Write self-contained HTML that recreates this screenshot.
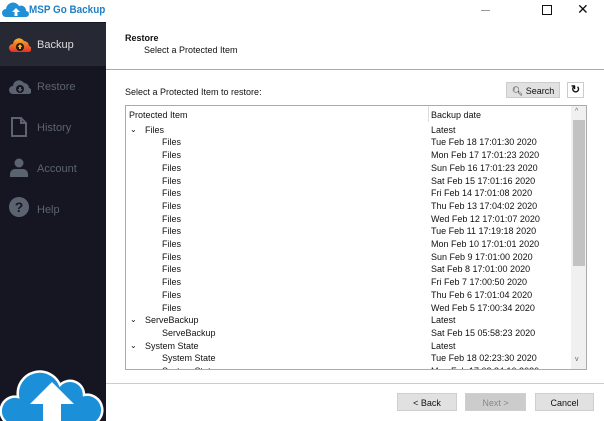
<html><head><style>
body{margin:0;width:604px;height:421px;overflow:hidden;font-family:"Liberation Sans",sans-serif;font-size:9px;color:#111;background:#fff;position:relative}
.sb{position:absolute;left:0;top:0;width:106px;height:421px;background:#151621}
.logo{position:absolute;left:0;top:0;width:106px;height:22px;background:#fff}
.nav{position:absolute;left:0;width:106px;height:43px;color:#5c6370;font-size:11px}
.nav span{position:absolute;left:37px;top:16px}
.ic{position:absolute;left:9px;top:14px}
.abs{position:absolute}
.row{position:absolute;height:12.7px;line-height:12.7px;font-size:9px;white-space:nowrap}
.btn{position:absolute;top:393px;height:18px;line-height:18px;text-align:center;font-size:9px;background:#e1e1e1;border:1px solid #cfcfcf;box-sizing:border-box}
</style></head><body>
<div class="sb"></div>
<div class="logo">
<svg class="abs" style="left:2px;top:2px" width="28" height="16" viewBox="0 0 28 16"><path d="M4 15a4 4 0 0 1 0-8a7 7 0 0 1 13-3a5 5 0 0 1 7 5a3 3 0 0 1 0 6z" fill="#1f8fd6"/><path d="M14 6l-4 4h2.5v4h3v-4H18z" fill="#fff"/></svg>
<div class="abs" style="left:29px;top:4px;font-weight:bold;font-size:11px;color:#1f7fc4;white-space:nowrap;transform:scaleX(0.9);transform-origin:0 0">MSP Go Backup</div></div>
<div class="nav" style="top:23px;background:#262833;color:#ddd"><svg class="ic" style="top:14px" width="22" height="16" viewBox="0 0 22 16"><defs><linearGradient id="g" x1="0" y1="0" x2="0" y2="1"><stop offset="0" stop-color="#f6b22a"/><stop offset="1" stop-color="#e5302a"/></linearGradient></defs><path d="M4 15a4 4 0 0 1 0-8a6 6 0 0 1 11-3a5 5 0 0 1 5 5a3 3 0 0 1 -1 6z" fill="url(#g)"/><circle cx="11" cy="10" r="4" fill="#1a1a1a"/><path d="M11 7l-2.5 3h1.5v2h2v-2h1.5z" fill="#f6b22a"/></svg><span>Backup</span></div>
<div class="nav" style="top:65px"><svg class="ic" width="22" height="16" viewBox="0 0 22 16"><path d="M4 15a4 4 0 0 1 0-8a6 6 0 0 1 11-3a5 5 0 0 1 5 5a3 3 0 0 1 -1 6z" fill="#5c6370"/><circle cx="11" cy="10" r="4" fill="#151621"/><path d="M11 13l-2.5-3h1.5v-2h2v2h1.5z" fill="#5c6370"/></svg><span>Restore</span></div>
<div class="nav" style="top:106px"><svg class="ic" style="left:11px;top:11px" width="16" height="20" viewBox="0 0 16 20"><path d="M1 1h9l5 5v13H1z" fill="none" stroke="#5c6370" stroke-width="2"/><path d="M10 1v5h5" fill="none" stroke="#5c6370" stroke-width="2"/></svg><span>History</span></div>
<div class="nav" style="top:147px"><svg class="ic" style="left:10px;top:11px" width="18" height="20" viewBox="0 0 18 20"><circle cx="9" cy="5" r="4.5" fill="#5c6370"/><path d="M0 19v-3a5 5 0 0 1 5-5h8a5 5 0 0 1 5 5v3z" fill="#5c6370"/></svg><span>Account</span></div>
<div class="nav" style="top:188px"><svg class="ic" style="left:9px;top:9px" width="20" height="20" viewBox="0 0 20 20"><circle cx="10" cy="10" r="10" fill="#5c6370"/><text x="10" y="15" text-anchor="middle" font-size="14" font-weight="bold" fill="#151621" font-family="Liberation Sans">?</text></svg><span>Help</span></div>
<svg class="abs" style="left:0;top:365px" width="106" height="56" viewBox="0 0 106 56"><path d="M12 60a14 14 0 0 1 6-28a22 22 0 0 1 42-12a14 14 0 0 1 24 10a14 14 0 0 1 6 30z" fill="#1b8fd8" stroke="#fff" stroke-width="2.5"/><path d="M52 17l-22 22h13v20h18V39h13z" fill="#fff"/></svg>

<div class="abs" style="left:481px;top:10px;width:9px;height:1px;background:#999"></div>
<div class="abs" style="left:542px;top:5px;width:8px;height:8px;border:1px solid #111"></div>
<div class="abs" style="left:577px;top:1px;font-size:14px">✕</div>
<div class="abs" style="left:125px;top:33px;font-weight:bold">Restore</div>
<div class="abs" style="left:144px;top:45px">Select a Protected Item</div>
<div class="abs" style="left:106px;top:69px;width:498px;height:1px;background:#aaa"></div>
<div class="abs" style="left:125px;top:87px">Select a Protected Item to restore:</div>
<div class="abs" style="left:506px;top:82px;width:54px;height:16px;line-height:16px;background:#e1e1e1;border:1px solid #ccc;box-sizing:border-box;text-align:center">&#x1F50D;&#xFE0E; Search</div>
<div class="abs" style="left:567px;top:82px;width:17px;height:16px;line-height:15px;border:1px solid #ccc;box-sizing:border-box;text-align:center;font-weight:bold;font-size:11px">↻</div>
<div class="abs" style="left:125px;top:105px;width:462px;height:265px;border:1px solid #aaa;box-sizing:border-box;overflow:hidden">
<div class="abs" style="left:445px;top:0;width:16px;height:263px;background:#f0f0f0"></div>
<div class="abs" style="left:447px;top:14px;width:12px;height:146px;background:#c2c2c2"></div>
<div class="abs" style="left:449px;top:2px;font-size:7px;color:#666">^</div>
<div class="abs" style="left:449px;top:250px;font-size:7px;color:#666">v</div>
<div class="abs" style="left:302px;top:0;width:1px;height:16px;background:#ddd"></div>
<div id="r"></div>
</div>
<div class="abs" style="left:106px;top:383px;width:498px;height:1px;background:#ccc"></div>
<div class="btn" style="left:397px;width:60px">&lt; Back</div>
<div class="btn" style="left:465px;width:61px;background:#ccc;color:#888">Next &gt;</div>
<div class="btn" style="left:535px;width:59px">Cancel</div>
<script>
var d=[["Protected Item","Backup date",2],["Files","Latest",1],["Files","Tue Feb 18 17:01:30 2020",0],["Files","Mon Feb 17 17:01:23 2020",0],["Files","Sun Feb 16 17:01:23 2020",0],["Files","Sat Feb 15 17:01:16 2020",0],["Files","Fri Feb 14 17:01:08 2020",0],["Files","Thu Feb 13 17:04:02 2020",0],["Files","Wed Feb 12 17:01:07 2020",0],["Files","Tue Feb 11 17:19:18 2020",0],["Files","Mon Feb 10 17:01:01 2020",0],["Files","Sun Feb 9 17:01:00 2020",0],["Files","Sat Feb 8 17:01:00 2020",0],["Files","Fri Feb 7 17:00:50 2020",0],["Files","Thu Feb 6 17:01:04 2020",0],["Files","Wed Feb 5 17:00:34 2020",0],["ServeBackup","Latest",1],["ServeBackup","Sat Feb 15 05:58:23 2020",0],["System State","Latest",1],["System State","Tue Feb 18 02:23:30 2020",0],["System State","Mon Feb 17 02:24:10 2020",0]];
var h="";d.forEach(function(r,i){var t=i==0?3:5+i*12.7;var x=r[2]==2?3:r[2]==1?19:36;
if(r[2]==1)h+='<div class="row" style="left:4px;top:'+t+'px;font-size:8px">&#8964;</div>';
h+='<div class="row" style="left:'+x+'px;top:'+t+'px">'+r[0]+'</div><div class="row" style="left:305px;top:'+t+'px">'+r[1]+'</div>';});
document.getElementById("r").innerHTML=h;
</script>
</body></html>
